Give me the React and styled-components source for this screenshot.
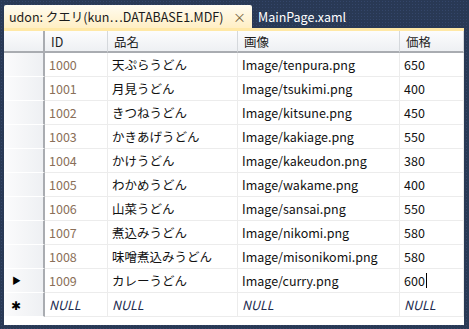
import styled, { createGlobalStyle } from "styled-components";

const GlobalStyle = createGlobalStyle`
  html, body {
    margin: 0;
    padding: 0;
    background: #293955;
  }
`;

const font = `"Noto Sans CJK JP", "Noto Sans", sans-serif`;

const Window = styled.div`
  width: 469px;
  height: 329px;
  box-sizing: border-box;
  padding: 5px 5px 4px 4px;
  display: flex;
  flex-direction: column;
  background-color: #293955;
  background-image: radial-gradient(#34466a 0.6px, transparent 0.8px);
  background-size: 3px 3px;
  font-family: ${font};
  font-size: 12.5px;
`;

const TabStrip = styled.div`
  display: flex;
  align-items: stretch;
  height: 23px;
`;

const ActiveTab = styled.div`
  width: 248px;
  box-sizing: border-box;
  display: flex;
  align-items: center;
  justify-content: space-between;
  padding: 0 6px 0 5px;
  border-radius: 2px 2px 0 0;
  background: linear-gradient(#fffbf0, #ffefc4);
  color: #1b1b1b;
  white-space: nowrap;
`;

const Close = styled.span`
  color: #75633d;
  font-size: 13px;
`;

const InactiveTab = styled.div`
  display: flex;
  align-items: center;
  padding: 0 6px;
  color: #fff;
`;

const Stripe = styled.div`
  height: 3px;
  background: #ffe8a6;
`;

const Panel = styled.div`
  flex: 1;
  background: #fff;
`;

const Grid = styled.div`
  display: grid;
  grid-template-columns: 41px 63px 130px 162px 1fr;
`;

const HeadCell = styled.div`
  height: 22px;
  box-sizing: border-box;
  display: flex;
  align-items: center;
  padding-left: 6px;
  background: linear-gradient(#fcfcfd, #eef0f3);
  border-right: 1px solid #d5d8dc;
  border-bottom: 2px solid #a9acb1;
  color: #1e1e1e;
  &:first-child {
    border-right: 2px solid #a9acb1;
  }
`;

const RowHead = styled.div`
  height: 24px;
  box-sizing: border-box;
  display: flex;
  align-items: center;
  padding-left: ${(p) => (p.$star ? 7 : 8)}px;
  background: linear-gradient(90deg, #fbfbfc, #eef0f3);
  border-right: 2px solid #a9acb1;
  border-bottom: 1px solid #ffffff;
  font-size: ${(p) => (p.$star ? 12 : 9)}px;
  color: #000;
`;

const Cell = styled.div`
  height: 24px;
  box-sizing: border-box;
  display: flex;
  align-items: center;
  padding-left: 4px;
  border-right: 1px solid #ececec;
  border-bottom: 1px solid #ececec;
  color: ${(p) => (p.$null ? "#1d2b4f" : p.$id ? "#8a6f58" : "#111")};
  font-style: ${(p) => (p.$null ? "italic" : "normal")};
  white-space: nowrap;
`;

const Caret = styled.span`
  display: inline-block;
  width: 1px;
  height: 15px;
  background: #000;
  margin-left: 1px;
`;

const rows = [
  [1000, "天ぷらうどん", "Image/tenpura.png", 650],
  [1001, "月見うどん", "Image/tsukimi.png", 400],
  [1002, "きつねうどん", "Image/kitsune.png", 450],
  [1003, "かきあげうどん", "Image/kakiage.png", 550],
  [1004, "かけうどん", "Image/kakeudon.png", 380],
  [1005, "わかめうどん", "Image/wakame.png", 400],
  [1006, "山菜うどん", "Image/sansai.png", 550],
  [1007, "煮込みうどん", "Image/nikomi.png", 580],
  [1008, "味噌煮込みうどん", "Image/misonikomi.png", 580],
  [1009, "カレーうどん", "Image/curry.png", 600],
];

export default function App() {
  return (
    <>
      <GlobalStyle />
      <Window>
        <TabStrip>
          <ActiveTab>
            <span>udon: クエリ(kun…DATABASE1.MDF)</span>
            <Close>×</Close>
          </ActiveTab>
          <InactiveTab>MainPage.xaml</InactiveTab>
        </TabStrip>
        <Stripe />
        <Panel>
          <Grid>
            <HeadCell />
            <HeadCell>ID</HeadCell>
            <HeadCell>品名</HeadCell>
            <HeadCell>画像</HeadCell>
            <HeadCell>価格</HeadCell>
            {rows.map(([id, name, img, price], i) => {
              const current = i === rows.length - 1;
              return [
                <RowHead key={`h${id}`}>{current ? "▶" : ""}</RowHead>,
                <Cell key={`i${id}`} $id>{id}</Cell>,
                <Cell key={`n${id}`}>{name}</Cell>,
                <Cell key={`g${id}`}>{img}</Cell>,
                <Cell key={`p${id}`}>
                  {price}
                  {current && <Caret />}
                </Cell>,
              ];
            })}
            <RowHead $star>✱</RowHead>
            <Cell $null>NULL</Cell>
            <Cell $null>NULL</Cell>
            <Cell $null>NULL</Cell>
            <Cell $null>NULL</Cell>
          </Grid>
        </Panel>
      </Window>
    </>
  );
}
